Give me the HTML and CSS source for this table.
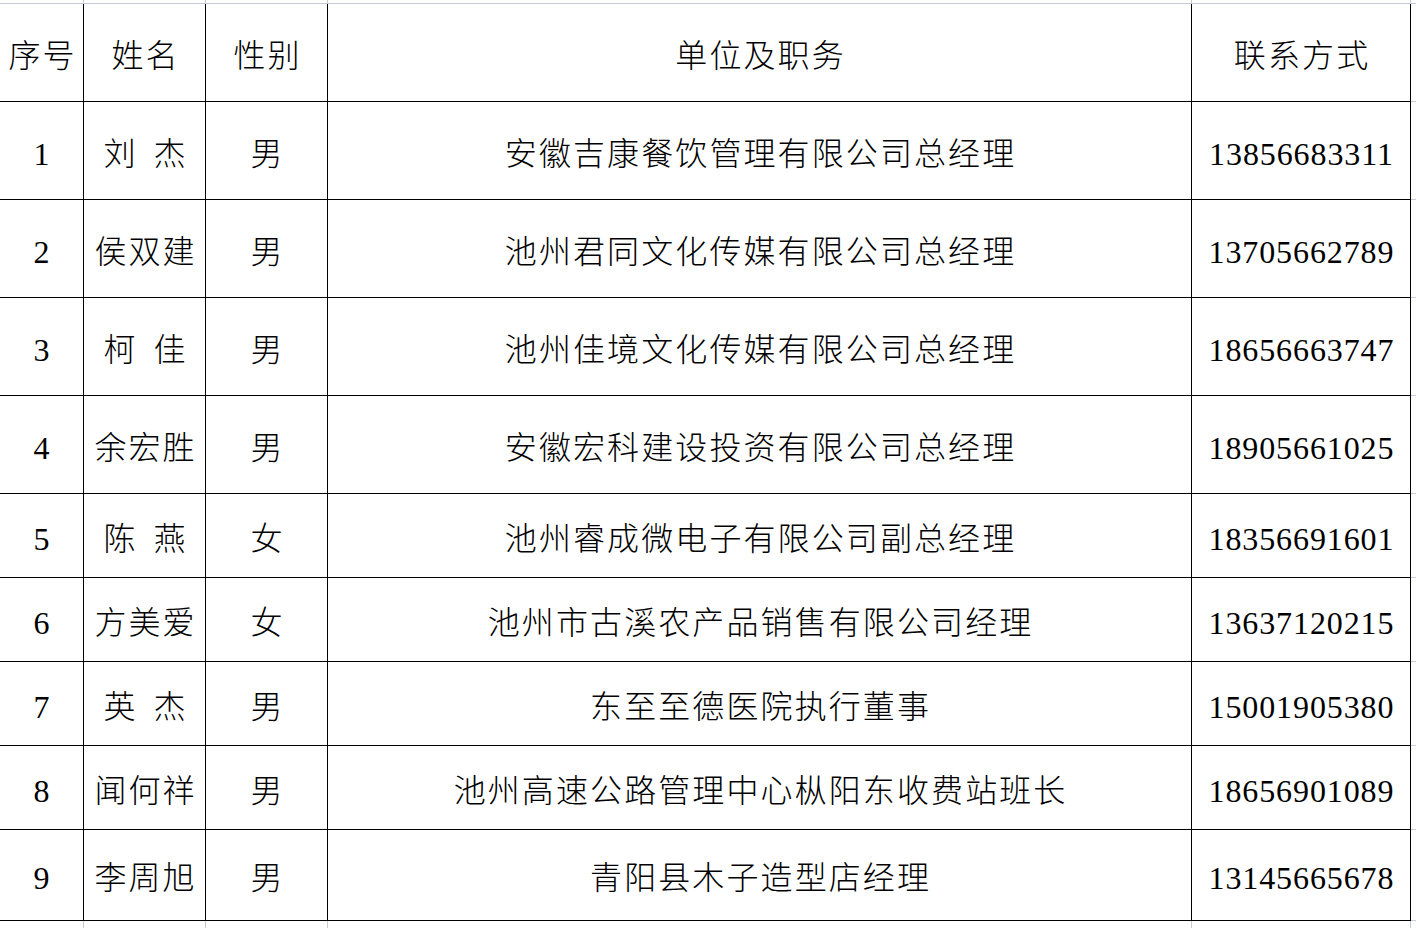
FILE: index.html
```html
<!DOCTYPE html>
<html lang="zh-CN">
<head>
<meta charset="utf-8">
<title>名单</title>
<link rel="stylesheet" href="styles.css">
</head>
<body>
<table class="sheet">
  <tr class="strip-top">
    <td class="c1"></td><td class="c2"></td><td class="c3"></td><td class="c4"></td><td class="c5"></td><td class="cx"></td>
  </tr>
  <tr class="head">
    <td class="c1 cn">序号</td><td class="c2 cn">姓名</td><td class="c3 cn">性别</td><td class="c4 cn">单位及职务</td><td class="c5 cn">联系方式</td><td class="cx"></td>
  </tr>
  <tr class="tall">
    <td class="c1 num">1</td><td class="c2 cn">刘<span class="gap"></span>杰</td><td class="c3 cn">男</td><td class="c4 cn">安徽吉康餐饮管理有限公司总经理</td><td class="c5 num tel">13856683311</td><td class="cx"></td>
  </tr>
  <tr class="tall">
    <td class="c1 num">2</td><td class="c2 cn">侯双建</td><td class="c3 cn">男</td><td class="c4 cn">池州君同文化传媒有限公司总经理</td><td class="c5 num tel">13705662789</td><td class="cx"></td>
  </tr>
  <tr class="tall">
    <td class="c1 num">3</td><td class="c2 cn">柯<span class="gap"></span>佳</td><td class="c3 cn">男</td><td class="c4 cn">池州佳境文化传媒有限公司总经理</td><td class="c5 num tel">18656663747</td><td class="cx"></td>
  </tr>
  <tr class="tall">
    <td class="c1 num">4</td><td class="c2 cn">余宏胜</td><td class="c3 cn">男</td><td class="c4 cn">安徽宏科建设投资有限公司总经理</td><td class="c5 num tel">18905661025</td><td class="cx"></td>
  </tr>
  <tr class="short">
    <td class="c1 num">5</td><td class="c2 cn">陈<span class="gap"></span>燕</td><td class="c3 cn">女</td><td class="c4 cn">池州睿成微电子有限公司副总经理</td><td class="c5 num tel">18356691601</td><td class="cx"></td>
  </tr>
  <tr class="short">
    <td class="c1 num">6</td><td class="c2 cn">方美爱</td><td class="c3 cn">女</td><td class="c4 cn">池州市古溪农产品销售有限公司经理</td><td class="c5 num tel">13637120215</td><td class="cx"></td>
  </tr>
  <tr class="short">
    <td class="c1 num">7</td><td class="c2 cn">英<span class="gap"></span>杰</td><td class="c3 cn">男</td><td class="c4 cn">东至至德医院执行董事</td><td class="c5 num tel">15001905380</td><td class="cx"></td>
  </tr>
  <tr class="short">
    <td class="c1 num">8</td><td class="c2 cn">闻何祥</td><td class="c3 cn">男</td><td class="c4 cn">池州高速公路管理中心枞阳东收费站班长</td><td class="c5 num tel">18656901089</td><td class="cx"></td>
  </tr>
  <tr class="last">
    <td class="c1 num">9</td><td class="c2 cn">李周旭</td><td class="c3 cn">男</td><td class="c4 cn">青阳县木子造型店经理</td><td class="c5 num tel">13145665678</td><td class="cx"></td>
  </tr>
  <tr class="strip-bottom">
    <td class="c1"></td><td class="c2"></td><td class="c3"></td><td class="c4"></td><td class="c5"></td><td class="cx"></td>
  </tr>
</table>
</body>
</html>
```

FILE: styles.css
```css
html, body {
  margin: 0;
  padding: 0;
  background: #ffffff;
  overflow: hidden;
}

.sheet {
  border-collapse: separate;
  border-spacing: 0;
  table-layout: fixed;
  width: 1416px;
}

.sheet td {
  box-sizing: border-box;
  padding: 0;
  text-align: center;
  vertical-align: middle;
  color: #000000;
  font-size: 32px;
  line-height: 32px;
  white-space: nowrap;
  border-right: 1px solid #000000;
  border-bottom: 1px solid #000000;
}

.c1 { width: 84px; }
.c2 { width: 122px; }
.c3 { width: 122px; }
.c4 { width: 864px; }
.c5 { width: 219px; }
.sheet td.cx {
  width: auto;
  border-right: none;
  border-bottom: 1px solid #c5cad6;
}

.strip-top td {
  height: 4px;
  border-right: 1px solid #c5cad6;
  border-bottom: 1px solid #c5cad6;
}
.sheet .strip-top td.cx { border-right: none; }

.strip-bottom td {
  height: 8px;
  border-right: 1px solid #c5cad6;
  border-bottom: none;
}
.sheet .strip-bottom td.cx { border: none; }

.head td { height: 98px; }
.tall td { height: 98px; }
.short td { height: 84px; }
.last td { height: 91px; }

.cn {
  font-family: "Noto Sans CJK SC", "Liberation Serif", sans-serif;
  font-weight: 300;
  letter-spacing: 2.1px;
  padding-left: 2.1px !important;
}

.num {
  font-family: "Liberation Serif", "Noto Sans CJK SC", serif;
  padding-top: 6px !important;
}

.tel {
  letter-spacing: 0.9px;
  padding-left: 0.9px !important;
}

.gap {
  display: inline-block;
  width: 16px;
}
```
